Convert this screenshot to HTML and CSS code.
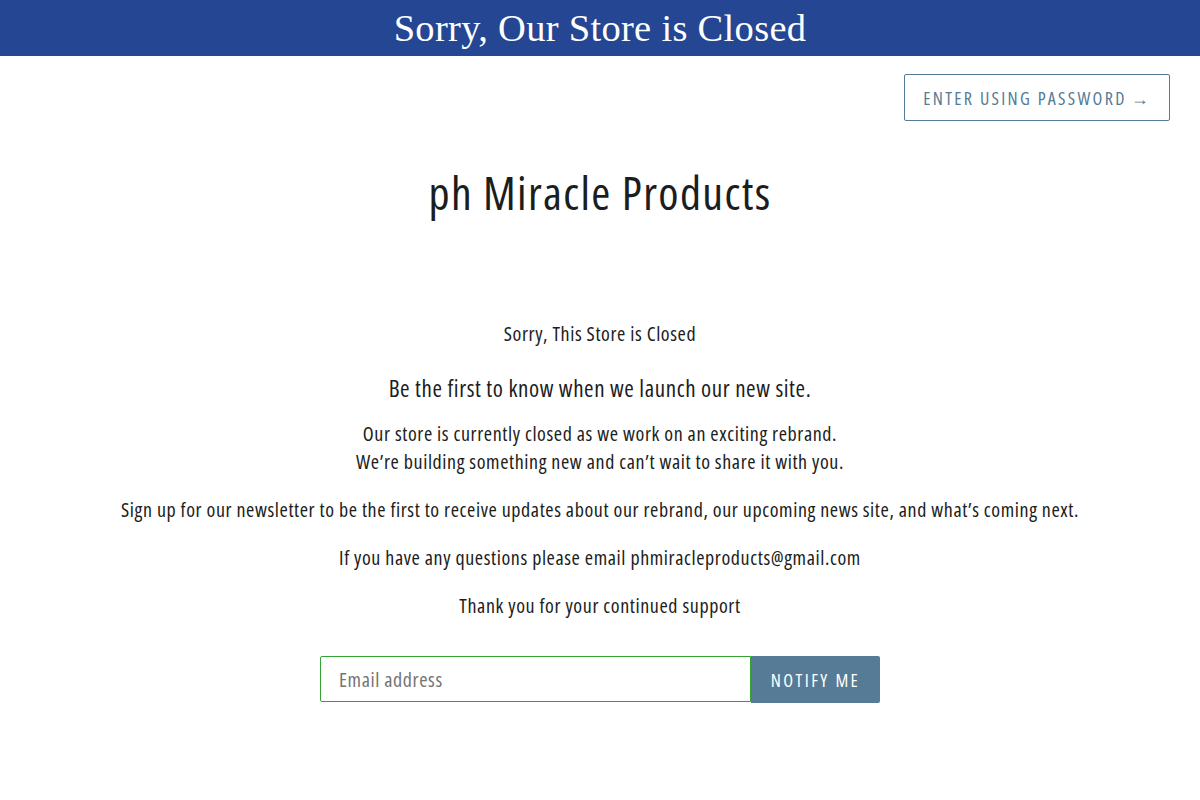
FILE: index.html
```html
<!DOCTYPE html>
<html lang="en">
<head>
<meta charset="utf-8">
<title>ph Miracle Products</title>
<link rel="stylesheet" href="styles.css">
</head>
<body>
<header class="banner">
  <h2 class="banner-title">Sorry, Our Store is Closed</h2>
</header>
<div class="top-bar">
  <a class="btn-outline" href="#">Enter using password <span class="arrow">&rarr;</span></a>
</div>
<main class="content">
  <h1 class="store-name">ph Miracle Products</h1>
  <p class="closed">Sorry, This Store is Closed</p>
  <h3 class="lead">Be the first to know when we launch our new site.</h3>
  <p class="msg">Our store is currently closed as we work on an exciting rebrand.<br>We’re building something new and can’t wait to share it with you.</p>
  <p class="msg">Sign up for our newsletter to be the first to receive updates about our rebrand, our upcoming news site, and what’s coming next.</p>
  <p class="msg">If you have any questions please email phmiracleproducts@gmail.com</p>
  <p class="msg">Thank you for your continued support</p>
  <form class="signup">
    <input class="email" type="email" placeholder="Email address">
    <button class="notify" type="button">Notify me</button>
  </form>
</main>
</body>
</html>
```
FILE: styles.css
```css
* { box-sizing: border-box; }
body {
  margin: 0;
  background: #fff;
  color: #1c1d1d;
  font-family: "Open Sans", "Noto Sans", sans-serif;
  font-stretch: 75%;
  font-weight: 400;
  letter-spacing: 0.038em;
}
.banner {
  background: #244693;
  height: 56px;
  display: flex;
  align-items: center;
  justify-content: center;
}
.banner-title {
  margin: 0;
  color: #fff;
  font-family: "Liberation Serif", "DejaVu Serif", serif;
  font-stretch: normal;
  font-weight: 400;
  font-size: 38.5px;
  letter-spacing: 0.3px;
}
.top-bar {
  display: flex;
  justify-content: flex-end;
  padding: 18px 30px 0;
}
.btn-outline {
  display: inline-flex;
  align-items: center;
  height: 47px;
  padding: 0 18px;
  border: 1px solid #557b97;
  border-radius: 2px;
  color: #557b97;
  text-decoration: none;
  text-transform: uppercase;
  font-size: 18px;
  letter-spacing: 2.3px;
}
.arrow { margin-left: 4px; }
.content {
  display: flex;
  flex-direction: column;
  align-items: center;
  text-align: center;
}
.store-name {
  margin: 42px 0 0;
  font-weight: 400;
  font-size: 46px;
  line-height: 58px;
  letter-spacing: 0.03em;
}
.closed {
  margin: 99px 0 0;
  font-size: 20px;
  line-height: 28px;
}
.lead {
  margin: 24px 0 0;
  font-weight: 400;
  font-size: 23px;
  line-height: 32px;
}
.msg {
  margin: 20px 0 0;
  font-size: 20px;
  line-height: 28px;
}
.lead + .msg { margin-top: 16px; }
.signup {
  display: flex;
  margin: 36px 0 0;
}
.email {
  width: 431px;
  height: 46px;
  border: 1px solid #32a232;
  border-radius: 2px 0 0 2px;
  padding: 0 18px;
  font-family: inherit;
  font-stretch: inherit;
  font-weight: inherit;
  letter-spacing: inherit;
  font-size: 20px;
  color: #1c1d1d;
  outline: none;
}
.email::placeholder { color: #747474; }
.notify {
  width: 129px;
  height: 47px;
  border: 0;
  border-radius: 0 2px 2px 0;
  background: #557b97;
  color: #fff;
  font-family: inherit;
  font-stretch: inherit;
  font-weight: inherit;
  font-size: 18px;
  text-transform: uppercase;
  letter-spacing: 2.4px;
}
```
